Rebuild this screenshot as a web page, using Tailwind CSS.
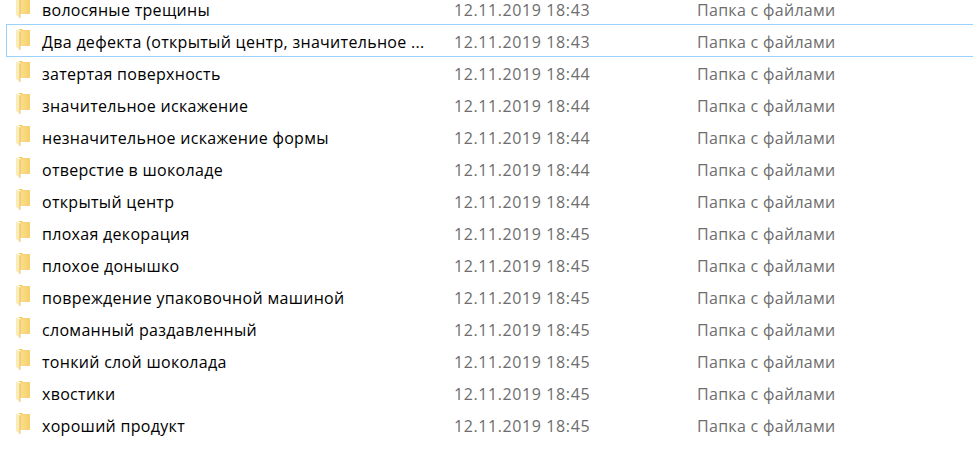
<!DOCTYPE html>
<html lang="ru">
<head>
  <meta charset="UTF-8">
  <title>Папки</title>
  <script src="https://cdn.jsdelivr.net/npm/@tailwindcss/browser@4"></script>
</head>
<body class="bg-white overflow-hidden h-[474px] font-['Open_Sans',sans-serif] text-[16px]">
  <svg width="0" height="0" class="absolute">
    <defs>
      <linearGradient id="body" x1="0" x2="1" y1="0" y2="0">
        <stop offset="0" stop-color="#fbe08e"/>
        <stop offset="1" stop-color="#f6cf6b"/>
      </linearGradient>
    </defs>
    <symbol id="folder" viewBox="0 0 14 21">
      <path d="M1 0h5l1 1h7v16H4V1z" fill="#f3cd6c"/>
      <path d="M4 1.500h10V17H4z" fill="url(#body)"/>
      <path d="M0 .5l4 2V21L0 18z" fill="#fdebb4"/>
      <path d="M4 2.500V21" stroke="#dcb35a" stroke-width=".8" fill="none"/>
    </symbol>
  </svg>

  <div class="-mt-[8px] text-[#6d6d6d]">
    <div class="flex items-center w-[980px] h-8 ml-[6px] pl-[9px] border border-transparent">
      <svg class="w-[14px] h-[21px] shrink-0 -mt-[2px]"><use href="#folder"/></svg>
      <span class="w-[424px] pl-[12px] pt-[4px] text-black tracking-[.3px] whitespace-nowrap">волосяные трещины</span>
      <span class="w-[243px] pt-[4px] tracking-[.6px]">12.11.2019 18:43</span>
      <span class="pt-[4px] tracking-[.3px]">Папка с файлами</span>
    </div>
    <div class="flex items-center w-[980px] h-[33px] -mb-[1px] ml-[6px] pl-[9px] border border-[#99d1ff]">
      <svg class="w-[14px] h-[21px] shrink-0 -mt-[3px]"><use href="#folder"/></svg>
      <span class="w-[424px] pl-[12px] pt-[3px] text-black tracking-[.3px] whitespace-nowrap">Два дефекта (открытый центр, значительное ...</span>
      <span class="w-[243px] pt-[3px] tracking-[.6px]">12.11.2019 18:43</span>
      <span class="pt-[3px] tracking-[.3px]">Папка с файлами</span>
    </div>
    <div class="flex items-center w-[980px] h-8 ml-[6px] pl-[9px] border border-transparent">
      <svg class="w-[14px] h-[21px] shrink-0 -mt-[2px]"><use href="#folder"/></svg>
      <span class="w-[424px] pl-[12px] pt-[4px] text-black tracking-[.3px] whitespace-nowrap">затертая поверхность</span>
      <span class="w-[243px] pt-[4px] tracking-[.6px]">12.11.2019 18:44</span>
      <span class="pt-[4px] tracking-[.3px]">Папка с файлами</span>
    </div>
    <div class="flex items-center w-[980px] h-8 ml-[6px] pl-[9px] border border-transparent">
      <svg class="w-[14px] h-[21px] shrink-0 -mt-[2px]"><use href="#folder"/></svg>
      <span class="w-[424px] pl-[12px] pt-[4px] text-black tracking-[.3px] whitespace-nowrap">значительное искажение</span>
      <span class="w-[243px] pt-[4px] tracking-[.6px]">12.11.2019 18:44</span>
      <span class="pt-[4px] tracking-[.3px]">Папка с файлами</span>
    </div>
    <div class="flex items-center w-[980px] h-8 ml-[6px] pl-[9px] border border-transparent">
      <svg class="w-[14px] h-[21px] shrink-0 -mt-[2px]"><use href="#folder"/></svg>
      <span class="w-[424px] pl-[12px] pt-[4px] text-black tracking-[.3px] whitespace-nowrap">незначительное искажение формы</span>
      <span class="w-[243px] pt-[4px] tracking-[.6px]">12.11.2019 18:44</span>
      <span class="pt-[4px] tracking-[.3px]">Папка с файлами</span>
    </div>
    <div class="flex items-center w-[980px] h-8 ml-[6px] pl-[9px] border border-transparent">
      <svg class="w-[14px] h-[21px] shrink-0 -mt-[2px]"><use href="#folder"/></svg>
      <span class="w-[424px] pl-[12px] pt-[4px] text-black tracking-[.3px] whitespace-nowrap">отверстие в шоколаде</span>
      <span class="w-[243px] pt-[4px] tracking-[.6px]">12.11.2019 18:44</span>
      <span class="pt-[4px] tracking-[.3px]">Папка с файлами</span>
    </div>
    <div class="flex items-center w-[980px] h-8 ml-[6px] pl-[9px] border border-transparent">
      <svg class="w-[14px] h-[21px] shrink-0 -mt-[2px]"><use href="#folder"/></svg>
      <span class="w-[424px] pl-[12px] pt-[4px] text-black tracking-[.3px] whitespace-nowrap">открытый центр</span>
      <span class="w-[243px] pt-[4px] tracking-[.6px]">12.11.2019 18:44</span>
      <span class="pt-[4px] tracking-[.3px]">Папка с файлами</span>
    </div>
    <div class="flex items-center w-[980px] h-8 ml-[6px] pl-[9px] border border-transparent">
      <svg class="w-[14px] h-[21px] shrink-0 -mt-[2px]"><use href="#folder"/></svg>
      <span class="w-[424px] pl-[12px] pt-[4px] text-black tracking-[.3px] whitespace-nowrap">плохая декорация</span>
      <span class="w-[243px] pt-[4px] tracking-[.6px]">12.11.2019 18:45</span>
      <span class="pt-[4px] tracking-[.3px]">Папка с файлами</span>
    </div>
    <div class="flex items-center w-[980px] h-8 ml-[6px] pl-[9px] border border-transparent">
      <svg class="w-[14px] h-[21px] shrink-0 -mt-[2px]"><use href="#folder"/></svg>
      <span class="w-[424px] pl-[12px] pt-[4px] text-black tracking-[.3px] whitespace-nowrap">плохое донышко</span>
      <span class="w-[243px] pt-[4px] tracking-[.6px]">12.11.2019 18:45</span>
      <span class="pt-[4px] tracking-[.3px]">Папка с файлами</span>
    </div>
    <div class="flex items-center w-[980px] h-8 ml-[6px] pl-[9px] border border-transparent">
      <svg class="w-[14px] h-[21px] shrink-0 -mt-[2px]"><use href="#folder"/></svg>
      <span class="w-[424px] pl-[12px] pt-[4px] text-black tracking-[.3px] whitespace-nowrap">повреждение упаковочной машиной</span>
      <span class="w-[243px] pt-[4px] tracking-[.6px]">12.11.2019 18:45</span>
      <span class="pt-[4px] tracking-[.3px]">Папка с файлами</span>
    </div>
    <div class="flex items-center w-[980px] h-8 ml-[6px] pl-[9px] border border-transparent">
      <svg class="w-[14px] h-[21px] shrink-0 -mt-[2px]"><use href="#folder"/></svg>
      <span class="w-[424px] pl-[12px] pt-[4px] text-black tracking-[.3px] whitespace-nowrap">сломанный раздавленный</span>
      <span class="w-[243px] pt-[4px] tracking-[.6px]">12.11.2019 18:45</span>
      <span class="pt-[4px] tracking-[.3px]">Папка с файлами</span>
    </div>
    <div class="flex items-center w-[980px] h-8 ml-[6px] pl-[9px] border border-transparent">
      <svg class="w-[14px] h-[21px] shrink-0 -mt-[2px]"><use href="#folder"/></svg>
      <span class="w-[424px] pl-[12px] pt-[4px] text-black tracking-[.3px] whitespace-nowrap">тонкий слой шоколада</span>
      <span class="w-[243px] pt-[4px] tracking-[.6px]">12.11.2019 18:45</span>
      <span class="pt-[4px] tracking-[.3px]">Папка с файлами</span>
    </div>
    <div class="flex items-center w-[980px] h-8 ml-[6px] pl-[9px] border border-transparent">
      <svg class="w-[14px] h-[21px] shrink-0 -mt-[2px]"><use href="#folder"/></svg>
      <span class="w-[424px] pl-[12px] pt-[4px] text-black tracking-[.3px] whitespace-nowrap">хвостики</span>
      <span class="w-[243px] pt-[4px] tracking-[.6px]">12.11.2019 18:45</span>
      <span class="pt-[4px] tracking-[.3px]">Папка с файлами</span>
    </div>
    <div class="flex items-center w-[980px] h-8 ml-[6px] pl-[9px] border border-transparent">
      <svg class="w-[14px] h-[21px] shrink-0 -mt-[2px]"><use href="#folder"/></svg>
      <span class="w-[424px] pl-[12px] pt-[4px] text-black tracking-[.3px] whitespace-nowrap">хороший продукт</span>
      <span class="w-[243px] pt-[4px] tracking-[.6px]">12.11.2019 18:45</span>
      <span class="pt-[4px] tracking-[.3px]">Папка с файлами</span>
    </div>
  </div>
</body>
</html>
